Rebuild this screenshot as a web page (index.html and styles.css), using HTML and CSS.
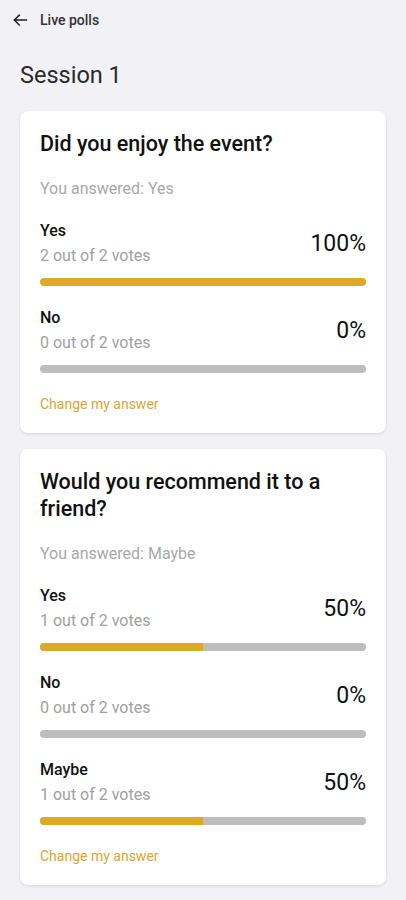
FILE: index.html
```html
<!DOCTYPE html>
<html lang="en">
<head>
    <meta charset="UTF-8">
    <meta name="viewport" content="width=device-width, initial-scale=1.0">
    <title>Live polls</title>
    <link rel="stylesheet" href="styles.css">
</head>
<body>
    <header class="topbar">
        <svg class="back-icon" width="18" height="18" viewBox="0 0 24 24">
            <path d="M20.5 12H4.5M11 5.5L4.5 12l6.5 6.5" fill="none" stroke="#222" stroke-width="2" stroke-linecap="square"/>
        </svg>
        <span class="topbar-title">Live polls</span>
    </header>

    <h1 class="session-title">Session 1</h1>

    <!-- Poll 1 -->
    <div class="poll-card">
        <h2 class="poll-question">Did you enjoy the event?</h2>
        <p class="answered">You answered: Yes</p>

        <div class="option">
            <div class="option-row">
                <div class="option-text">
                    <span class="option-label">Yes</span>
                    <span class="option-votes">2 out of 2 votes</span>
                </div>
                <span class="option-percent">100%</span>
            </div>
            <div class="bar"><div class="bar-fill" style="width: 100%"></div></div>
        </div>

        <div class="option">
            <div class="option-row">
                <div class="option-text">
                    <span class="option-label">No</span>
                    <span class="option-votes">0 out of 2 votes</span>
                </div>
                <span class="option-percent">0%</span>
            </div>
            <div class="bar"><div class="bar-fill" style="width: 0%"></div></div>
        </div>

        <a class="change-link">Change my answer</a>
    </div>

    <!-- Poll 2 -->
    <div class="poll-card">
        <h2 class="poll-question">Would you recommend it to a friend?</h2>
        <p class="answered">You answered: Maybe</p>

        <div class="option">
            <div class="option-row">
                <div class="option-text">
                    <span class="option-label">Yes</span>
                    <span class="option-votes">1 out of 2 votes</span>
                </div>
                <span class="option-percent">50%</span>
            </div>
            <div class="bar"><div class="bar-fill" style="width: 50%"></div></div>
        </div>

        <div class="option">
            <div class="option-row">
                <div class="option-text">
                    <span class="option-label">No</span>
                    <span class="option-votes">0 out of 2 votes</span>
                </div>
                <span class="option-percent">0%</span>
            </div>
            <div class="bar"><div class="bar-fill" style="width: 0%"></div></div>
        </div>

        <div class="option">
            <div class="option-row">
                <div class="option-text">
                    <span class="option-label">Maybe</span>
                    <span class="option-votes">1 out of 2 votes</span>
                </div>
                <span class="option-percent">50%</span>
            </div>
            <div class="bar"><div class="bar-fill" style="width: 50%"></div></div>
        </div>

        <a class="change-link">Change my answer</a>
    </div>
</body>
</html>
```

FILE: styles.css
```css
body {
    font-family: Roboto, "Noto Sans", Arial, sans-serif;
    margin: 0;
    padding: 0 0 16px;
    background-color: #f2f1f6;
    color: #1a1a1a;
}

.topbar {
    height: 40px;
    display: flex;
    align-items: center;
    gap: 11px;
    padding: 0 11px;
}

.back-icon {
    display: block;
}

.topbar-title {
    font-size: 14px;
    font-weight: 500;
    color: #333;
}

.session-title {
    font-size: 23.5px;
    font-weight: 400;
    line-height: 28px;
    color: #2a2a2a;
    margin: 21px 20px 22px;
}

.poll-card {
    background: #fff;
    border-radius: 8px;
    margin: 0 20px 16px;
    padding: 19px 20px 20px;
    box-shadow: 0 1px 3px rgba(0, 0, 0, 0.12);
}

.poll-question {
    font-size: 21.5px;
    font-weight: 500;
    line-height: 27px;
    color: #111;
    margin: 0;
}

.answered {
    font-size: 16px;
    line-height: 20px;
    color: #a8a8a8;
    margin: 22px 0 22px;
}

.option {
    margin-bottom: 22px;
}

.option-row {
    display: flex;
    justify-content: space-between;
    align-items: center;
}

.option-text {
    display: flex;
    flex-direction: column;
    gap: 5px;
}

.option-label {
    font-size: 16px;
    font-weight: 500;
    line-height: 20px;
    color: #111;
}

.option-votes {
    font-size: 16px;
    line-height: 20px;
    color: #a0a0a0;
}

.option-percent {
    font-size: 23px;
    color: #111;
}

.bar {
    margin-top: 12px;
    height: 8px;
    border-radius: 4px;
    background-color: #bdbdbd;
    overflow: hidden;
}

.bar-fill {
    height: 100%;
    background-color: #dcaa26;
}

.change-link {
    display: block;
    font-size: 14px;
    line-height: 18px;
    color: #d9a634;
    cursor: pointer;
}
```
